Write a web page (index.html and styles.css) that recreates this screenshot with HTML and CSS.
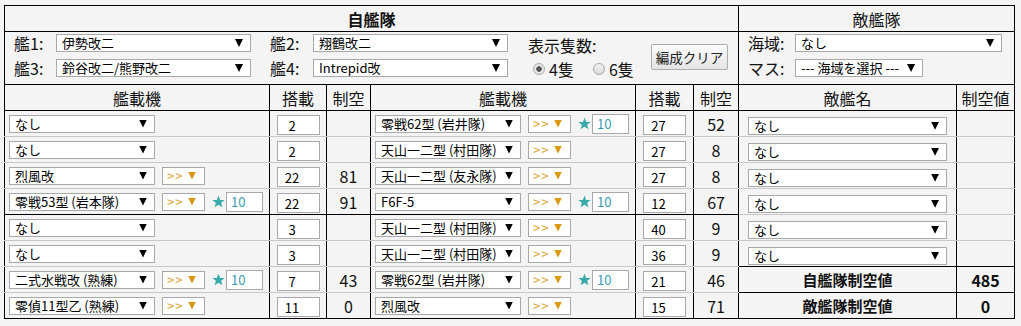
FILE: index.html
```html
<!DOCTYPE html>
<html lang="ja">
<head>
  <meta charset="UTF-8" />
  <title>制空権シミュレータ</title>
  <link rel="stylesheet" href="styles.css">
</head>
<body>
<table class="air">
  <colgroup>
    <col class="c-eq"><col class="c-slot"><col class="c-ap">
    <col class="c-eq"><col class="c-slot2"><col class="c-ap2">
    <col class="c-enemy"><col class="c-eap">
  </colgroup>
  <tr class="head">
    <th colspan="6" class="own">自艦隊</th>
    <th colspan="2">敵艦隊</th>
  </tr>
  <tr class="controls">
    <td colspan="6" class="ctl">
      <div class="fleet">
        <div class="ships">
          <label>艦1:</label><span class="dd w195"><select><option>伊勢改二</option></select></span>
          <label class="l2">艦2:</label><span class="dd w195"><select><option>翔鶴改二</option></select></span>
          <label>艦3:</label><span class="dd w195"><select><option>鈴谷改二/熊野改二</option></select></span>
          <label class="l2">艦4:</label><span class="dd w195"><select><option>Intrepid改</option></select></span>
        </div>
        <div class="count">
          <div>表示隻数:</div>
          <div class="radios">
            <label><input type="radio" name="ships" checked>4隻</label>
            <label><input type="radio" name="ships">6隻</label>
          </div>
        </div>
        <button class="clear">編成クリア</button>
      </div>
    </td>
    <td colspan="2" class="ctl">
      <div class="area">
        <label>海域:</label><span class="dd w207"><select><option>なし</option></select></span>
        <label>マス:</label><span class="dd w128"><select><option>--- 海域を選択 ---</option></select></span>
      </div>
    </td>
  </tr>
  <tr class="cols">
    <th>艦載機</th><th>搭載</th><th>制空</th>
    <th>艦載機</th><th>搭載</th><th>制空</th>
    <th>敵艦名</th><th>制空値</th>
  </tr>

  <tr class="data soft">
    <td><div class="slot"><span class="dd eq"><select><option>なし</option></select></span></div></td>
    <td><input class="num" value="2"></td>
    <td></td>
    <td><div class="slot"><span class="dd eq"><select><option>零戦62型 (岩井隊)</option></select></span><span class="dd pr"><select><option>&gt;&gt;</option></select></span><span class="star"><svg viewBox="0 0 24 24"><polygon points="12,1 15,9 23.5,9 16.8,14.3 19.3,22.8 12,17.8 4.7,22.8 7.2,14.3 0.5,9 9,9"/></svg></span><input class="lv" value="10"></div></td>
    <td><input class="num" value="27"></td>
    <td class="ap">52</td>
    <td><span class="dd en"><select><option>なし</option></select></span></td>
    <td></td>
  </tr>
  <tr class="data soft">
    <td><div class="slot"><span class="dd eq"><select><option>なし</option></select></span></div></td>
    <td><input class="num" value="2"></td>
    <td></td>
    <td><div class="slot"><span class="dd eq"><select><option>天山一二型 (村田隊)</option></select></span><span class="dd pr"><select><option>&gt;&gt;</option></select></span></div></td>
    <td><input class="num" value="27"></td>
    <td class="ap">8</td>
    <td><span class="dd en"><select><option>なし</option></select></span></td>
    <td></td>
  </tr>
  <tr class="data soft">
    <td><div class="slot"><span class="dd eq"><select><option>烈風改</option></select></span><span class="dd pr"><select><option>&gt;&gt;</option></select></span></div></td>
    <td><input class="num" value="22"></td>
    <td class="ap">81</td>
    <td><div class="slot"><span class="dd eq"><select><option>天山一二型 (友永隊)</option></select></span><span class="dd pr"><select><option>&gt;&gt;</option></select></span></div></td>
    <td><input class="num" value="27"></td>
    <td class="ap">8</td>
    <td><span class="dd en"><select><option>なし</option></select></span></td>
    <td></td>
  </tr>
  <tr class="data">
    <td><div class="slot"><span class="dd eq"><select><option>零戦53型 (岩本隊)</option></select></span><span class="dd pr"><select><option>&gt;&gt;</option></select></span><span class="star"><svg viewBox="0 0 24 24"><polygon points="12,1 15,9 23.5,9 16.8,14.3 19.3,22.8 12,17.8 4.7,22.8 7.2,14.3 0.5,9 9,9"/></svg></span><input class="lv" value="10"></div></td>
    <td><input class="num" value="22"></td>
    <td class="ap">91</td>
    <td><div class="slot"><span class="dd eq"><select><option>F6F-5</option></select></span><span class="dd pr"><select><option>&gt;&gt;</option></select></span><span class="star"><svg viewBox="0 0 24 24"><polygon points="12,1 15,9 23.5,9 16.8,14.3 19.3,22.8 12,17.8 4.7,22.8 7.2,14.3 0.5,9 9,9"/></svg></span><input class="lv" value="10"></div></td>
    <td><input class="num" value="12"></td>
    <td class="ap">67</td>
    <td class="g"><span class="dd en"><select><option>なし</option></select></span></td>
    <td class="g"></td>
  </tr>

  <tr class="data soft">
    <td><div class="slot"><span class="dd eq"><select><option>なし</option></select></span></div></td>
    <td><input class="num" value="3"></td>
    <td></td>
    <td><div class="slot"><span class="dd eq"><select><option>天山一二型 (村田隊)</option></select></span><span class="dd pr"><select><option>&gt;&gt;</option></select></span></div></td>
    <td><input class="num" value="40"></td>
    <td class="ap">9</td>
    <td><span class="dd en"><select><option>なし</option></select></span></td>
    <td></td>
  </tr>
  <tr class="data soft">
    <td><div class="slot"><span class="dd eq"><select><option>なし</option></select></span></div></td>
    <td><input class="num" value="3"></td>
    <td></td>
    <td><div class="slot"><span class="dd eq"><select><option>天山一二型 (村田隊)</option></select></span><span class="dd pr"><select><option>&gt;&gt;</option></select></span></div></td>
    <td><input class="num" value="36"></td>
    <td class="ap">9</td>
    <td class="k"><span class="dd en"><select><option>なし</option></select></span></td>
    <td class="k"></td>
  </tr>
  <tr class="data soft">
    <td><div class="slot"><span class="dd eq"><select><option>二式水戦改 (熟練)</option></select></span><span class="dd pr"><select><option>&gt;&gt;</option></select></span><span class="star"><svg viewBox="0 0 24 24"><polygon points="12,1 15,9 23.5,9 16.8,14.3 19.3,22.8 12,17.8 4.7,22.8 7.2,14.3 0.5,9 9,9"/></svg></span><input class="lv" value="10"></div></td>
    <td><input class="num" value="7"></td>
    <td class="ap">43</td>
    <td><div class="slot"><span class="dd eq"><select><option>零戦62型 (岩井隊)</option></select></span><span class="dd pr"><select><option>&gt;&gt;</option></select></span><span class="star"><svg viewBox="0 0 24 24"><polygon points="12,1 15,9 23.5,9 16.8,14.3 19.3,22.8 12,17.8 4.7,22.8 7.2,14.3 0.5,9 9,9"/></svg></span><input class="lv" value="10"></div></td>
    <td><input class="num" value="21"></td>
    <td class="ap">46</td>
    <td class="tot k">自艦隊制空値</td>
    <td class="tot k">485</td>
  </tr>
  <tr class="data">
    <td><div class="slot"><span class="dd eq"><select><option>零偵11型乙 (熟練)</option></select></span><span class="dd pr"><select><option>&gt;&gt;</option></select></span></div></td>
    <td><input class="num" value="11"></td>
    <td class="ap">0</td>
    <td><div class="slot"><span class="dd eq"><select><option>烈風改</option></select></span><span class="dd pr"><select><option>&gt;&gt;</option></select></span></div></td>
    <td><input class="num" value="15"></td>
    <td class="ap">71</td>
    <td class="tot">敵艦隊制空値</td>
    <td class="tot">0</td>
  </tr>
</table>
</body>
</html>
```

FILE: styles.css
```css
body {
  margin: 5px 4px;
  background: #f4f4f4;
  font-family: "Noto Sans CJK JP", "Noto Sans", sans-serif;
  font-size: 16px;
  color: #111;
}

/* main table */
.air {
  border-collapse: collapse;
  table-layout: fixed;
  width: 1011px;
}
.c-eq { width: 265px; }
.c-slot { width: 57px; }
.c-ap { width: 44px; }
.c-slot2 { width: 58px; }
.c-ap2 { width: 45px; }
.c-enemy { width: 218px; }
.c-eap { width: 58px; }

.air th,
.air td {
  border: 1px solid #000;
  padding: 0;
  font-weight: normal;
  text-align: center;
  vertical-align: middle;
  line-height: 22px;
}
.air th.own { font-weight: bold; }
.head th { height: 25px; }
.cols th { height: 25px; }
.data td { height: 25px; }

.soft td { border-bottom-color: #c8c8c8; }
.air td.g { border-bottom-color: #c8c8c8; }
.air td.k { border-bottom-color: #000; }

/* control row */
.controls td { height: 52px; text-align: left; vertical-align: top; }
.fleet {
  display: flex;
  align-items: flex-start;
  padding: 2px 0 0 9px;
}
.ships, .area {
  display: grid;
  row-gap: 7px;
  align-items: center;
}
.ships { grid-template-columns: 42px 195px 62px 195px; }
.area {
  grid-template-columns: 47px auto;
  justify-items: start;
  padding: 2px 0 0 9px;
}
.ships label, .area label { line-height: 18px; }
.ships .l2 { padding-left: 19px; }

.count {
  width: 123px;
  margin-left: 20px;
  line-height: 22px;
}
.radios {
  display: flex;
  gap: 19px;
  padding-left: 5px;
  margin-top: 2px;
}
.radios label { display: flex; align-items: center; }
.radios input {
  appearance: none;
  width: 12px;
  height: 12px;
  margin: 0 4px 0 0;
  border: 1px solid #a8a8a8;
  border-radius: 50%;
  background: linear-gradient(#f4f4f4, #d8d8d8);
}
.radios input:checked {
  background: radial-gradient(circle, #555 0 2.5px, #e6e6e6 3px);
}
.clear {
  margin-top: 10px;
  width: 77px;
  height: 26px;
  padding: 0;
  font: 13.5px "Noto Sans CJK JP", sans-serif;
  color: #222;
  border: 1px solid #adadad;
  border-radius: 2px;
  background: linear-gradient(#fcfcfc, #e4e4e4);
}

/* dropdowns */
.dd {
  position: relative;
  display: inline-block;
  height: 18px;
  vertical-align: middle;
}
.dd select {
  appearance: none;
  display: block;
  box-sizing: border-box;
  width: 100%;
  height: 18px;
  margin: 0;
  padding: 0 10px 0 5px;
  border: 1px solid #a9a9a9;
  border-radius: 0;
  background: #fff;
  color: #000;
  font: 13px/16px "Noto Sans CJK JP", sans-serif;
}
.dd::after {
  content: "";
  position: absolute;
  right: 8px;
  top: 5px;
  width: 8px;
  height: 8px;
  background: #000;
  clip-path: polygon(0 0, 100% 0, 50% 100%);
  pointer-events: none;
}
.w195 { width: 195px; }
.w207 { width: 207px; }
.w128 { width: 128px; }
.eq { width: 146px; }
.en { width: 199px; }
.pr { width: 43px; margin-left: 7px; }
.pr select { color: #e2a12a; padding-left: 4px; letter-spacing: 1px; }
.pr::after { background: #d9980f; right: 9px; }

/* slot cells */
.slot {
  display: flex;
  align-items: center;
  padding-left: 4px;
}
.star {
  width: 13px;
  height: 13px;
  margin: 0 1px 0 7px;
}
.star svg { display: block; width: 13px; height: 13px; fill: #3aa9a9; }
.lv, .num {
  box-sizing: border-box;
  height: 20px;
  margin: 0;
  border: 1px solid #a9a9a9;
  background: #fff;
  font: 13px "Noto Sans CJK JP", sans-serif;
}
.lv {
  width: 37px;
  padding: 0 0 0 4px;
  color: #3a9cb4;
}
.num {
  width: 43px;
  padding: 0 14px 0 2px;
  text-align: center;
  color: #000;
  vertical-align: middle;
}
.ap { font-size: 16px; }
.air td.tot { font-weight: bold; font-size: 15px; }
.air td.tot + .tot { font-size: 16px; }
```
